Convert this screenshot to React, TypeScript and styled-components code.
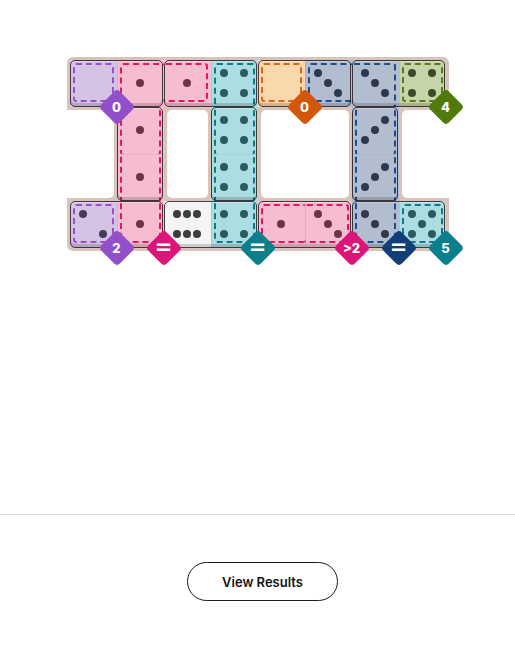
import React from "react";
import styled, { createGlobalStyle } from "styled-components";

const GlobalStyle = createGlobalStyle`
  body {
    margin: 0;
    background: #ffffff;
    font-family: "Liberation Sans", Arial, sans-serif;
  }
`;

type Tone = { bg: string; dash: string; pip: string; badge: string };

const tones: Record<string, Tone> = {
  purple: { bg: "#d5c3e3", dash: "#9850cf", pip: "#4a3a5a", badge: "#914fc9" },
  pink: { bg: "#f6bdd0", dash: "#e6155d", pip: "#6b3447", badge: "#dc1678" },
  teal: { bg: "#acdde3", dash: "#0c7b86", pip: "#2a5b60", badge: "#0b7f8c" },
  orange: { bg: "#f9d8ae", dash: "#e0650f", pip: "#5a3a1a", badge: "#d4560a" },
  blue: { bg: "#b2bed0", dash: "#1e4c8c", pip: "#2d394c", badge: "#133f78" },
  olive: { bg: "#c6d4aa", dash: "#5a7c15", pip: "#3e4a27", badge: "#507a0b" },
  none: { bg: "#f4f4f4", dash: "transparent", pip: "#3c3c3c", badge: "#444" },
};

// region id -> tone
const regionTone: Record<string, string> = {
  A: "purple",
  P: "pink",
  T: "teal",
  O: "orange",
  B: "blue",
  G: "olive",
  Q: "purple",
  R: "pink",
  S: "teal",
  W: "none",
};

const layout = [
  ["A", "P", "P", "T", "O", "B", "B", "G"],
  ["", "P", "", "T", "", "", "B", ""],
  ["", "P", "", "T", "", "", "B", ""],
  ["Q", "P", "W", "T", "R", "R", "B", "S"],
];

const pips = [
  [0, 1, 1, 4, 0, 3, 3, 4],
  [0, 1, 0, 4, 0, 0, 3, 0],
  [0, 1, 0, 4, 0, 0, 3, 0],
  [2, 1, 6, 4, 1, 3, 3, 5],
];

// vertical dominoes show their threes turned the other way
const turned = new Set(["1-6", "2-6"]);

const pipSpots: Record<string, [number, number][]> = {
  "0": [],
  "1": [[1, 1]],
  "2": [[0, 0], [2, 2]],
  "3": [[0, 0], [1, 1], [2, 2]],
  "3t": [[0, 2], [1, 1], [2, 0]],
  "4": [[0, 0], [0, 2], [2, 0], [2, 2]],
  "5": [[0, 0], [0, 2], [1, 1], [2, 0], [2, 2]],
  "6": [[0, 0], [0, 1], [0, 2], [2, 0], [2, 1], [2, 2]],
};

const dominoes = [
  { r: 0, c: 0, v: false },
  { r: 0, c: 2, v: false },
  { r: 0, c: 4, v: false },
  { r: 0, c: 6, v: false },
  { r: 1, c: 1, v: true },
  { r: 1, c: 3, v: true },
  { r: 1, c: 6, v: true },
  { r: 3, c: 0, v: false },
  { r: 3, c: 2, v: false },
  { r: 3, c: 4, v: false },
  { r: 3, c: 6, v: false },
];

const holes = [
  { r: 1, c: 0, span: 1, edge: "left" },
  { r: 1, c: 2, span: 1, edge: "none" },
  { r: 1, c: 4, span: 2, edge: "none" },
  { r: 1, c: 7, span: 1, edge: "right" },
];

const badges = [
  { r: 0, c: 0, tone: "purple", label: "0" },
  { r: 0, c: 4, tone: "orange", label: "0" },
  { r: 0, c: 7, tone: "olive", label: "4" },
  { r: 3, c: 0, tone: "purple", label: "2" },
  { r: 3, c: 1, tone: "pink", label: "=" },
  { r: 3, c: 3, tone: "teal", label: "=" },
  { r: 3, c: 5, tone: "pink", label: ">2" },
  { r: 3, c: 6, tone: "blue", label: "=" },
  { r: 3, c: 7, tone: "teal", label: "5" },
];

const Page = styled.div`
  display: flex;
  flex-direction: column;
  min-height: 669px;
`;

const Stage = styled.div`
  height: 514px;
  box-sizing: border-box;
  padding-top: 57px;
  display: flex;
  justify-content: center;
  align-items: flex-start;
`;

const Board = styled.div`
  display: grid;
  grid-template-columns: repeat(8, 47px);
  grid-template-rows: repeat(4, 47px);
  padding: 3px;
  background: #d9c4bb;
  border-radius: 6px;
`;

const Hole = styled.div<{ $r: number; $c: number; $span: number; $edge: string }>`
  grid-row: ${(p) => p.$r + 1} / span 2;
  grid-column: ${(p) => p.$c + 1} / span ${(p) => p.$span};
  background: #ffffff;
  margin: 3px;
  border-radius: 5px;
  ${(p) => p.$edge === "left" && "margin-left: -6px; border-radius: 0 5px 5px 0;"}
  ${(p) => p.$edge === "right" && "margin-right: -6px; border-radius: 5px 0 0 5px;"}
`;

const Cell = styled.div<{ $r: number; $c: number; $bg: string }>`
  grid-row: ${(p) => p.$r + 1};
  grid-column: ${(p) => p.$c + 1};
  position: relative;
  background: ${(p) => p.$bg};
  display: flex;
  align-items: center;
  justify-content: center;
`;

const Dashes = styled.div<{ $color: string; $t: boolean; $r: boolean; $b: boolean; $l: boolean }>`
  position: absolute;
  top: ${(p) => (p.$t ? "3px" : "-1px")};
  right: ${(p) => (p.$r ? "3px" : "-1px")};
  bottom: ${(p) => (p.$b ? "5px" : "-1px")};
  left: ${(p) => (p.$l ? "3px" : "-1px")};
  border: 2px dashed ${(p) => p.$color};
  border-top-style: ${(p) => (p.$t ? "dashed" : "none")};
  border-right-style: ${(p) => (p.$r ? "dashed" : "none")};
  border-bottom-style: ${(p) => (p.$b ? "dashed" : "none")};
  border-left-style: ${(p) => (p.$l ? "dashed" : "none")};
  border-radius: 3px;
`;

const PipGrid = styled.div`
  display: grid;
  grid-template-columns: repeat(3, 8px);
  grid-template-rows: repeat(3, 8px);
  gap: 2px;
  margin-bottom: 1px;
`;

const Pip = styled.span<{ $row: number; $col: number; $color: string }>`
  grid-row: ${(p) => p.$row + 1};
  grid-column: ${(p) => p.$col + 1};
  width: 8px;
  height: 8px;
  border-radius: 50%;
  background: ${(p) => p.$color};
`;

const Domino = styled.div<{ $r: number; $c: number; $v: boolean }>`
  grid-row: ${(p) => p.$r + 1} / span ${(p) => (p.$v ? 2 : 1)};
  grid-column: ${(p) => p.$c + 1} / span ${(p) => (p.$v ? 1 : 2)};
  position: relative;
  z-index: 2;
  border: 1px solid rgba(38, 28, 34, 0.85);
  border-radius: 5px;
  box-shadow: inset 0 -3px 0 rgba(0, 0, 0, 0.16), inset 0 1px 0 rgba(255, 255, 255, 0.25);
  margin: 0 0.5px;
  &::after {
    content: "";
    position: absolute;
    background: ${(p) => (p.$v ? "rgba(0, 0, 0, 0.04)" : "rgba(0, 0, 0, 0.07)")};
    ${(p) =>
      p.$v
        ? "left: 0; right: 0; top: 50%; height: 1px;"
        : "top: 0; bottom: 3px; left: 50%; width: 1px;"}
  }
`;

const BadgeSpot = styled.div<{ $r: number; $c: number }>`
  grid-row: ${(p) => p.$r + 1};
  grid-column: ${(p) => p.$c + 1};
  position: relative;
  z-index: 3;
`;

const Badge = styled.div<{ $bg: string }>`
  position: absolute;
  right: -13px;
  bottom: -13px;
  width: 26px;
  height: 26px;
  display: flex;
  align-items: center;
  justify-content: center;
  &::before {
    content: "";
    position: absolute;
    inset: 0;
    background: ${(p) => p.$bg};
    border-radius: 4px;
    transform: rotate(45deg);
  }
`;

const BadgeText = styled.span<{ $big: boolean }>`
  position: relative;
  color: #ffffff;
  font-family: ${(p) => (p.$big ? '"DejaVu Sans"' : "Inter")}, "Liberation Sans", sans-serif;
  font-weight: ${(p) => (p.$big ? 700 : 800)};
  font-size: ${(p) => (p.$big ? "21px" : "13px")};
  line-height: 1;
  margin-top: ${(p) => (p.$big ? "-1px" : "0")};
`;

const Divider = styled.div`
  height: 1px;
  background: #dcdcdc;
`;

const Footer = styled.div`
  display: flex;
  justify-content: center;
  padding: 47px 0 0 10px;
`;

const ResultsButton = styled.button`
  width: 151px;
  height: 39px;
  border: 1px solid #1a1a1a;
  border-radius: 20px;
  background: #ffffff;
  color: #121212;
  font-family: Inter, "Liberation Sans", sans-serif;
  font-weight: 600;
  font-size: 13px;
  cursor: pointer;
`;

const regionAt = (r: number, c: number) =>
  r < 0 || r > 3 || c < 0 || c > 7 ? "" : layout[r][c];

const App = () => (
  <Page>
    <GlobalStyle />
    <Stage>
      <Board>
        {holes.map((h) => (
          <Hole key={`h${h.r}-${h.c}`} $r={h.r} $c={h.c} $span={h.span} $edge={h.edge} />
        ))}
        {layout.map((row, r) =>
          row.map((id, c) => {
            if (!id) return null;
            const tone = tones[regionTone[id]];
            const key = turned.has(`${r}-${c}`) && pips[r][c] === 3 ? "3t" : String(pips[r][c]);
            return (
              <Cell key={`${r}-${c}`} $r={r} $c={c} $bg={tone.bg}>
                {id !== "W" && (
                  <Dashes
                    $color={tone.dash}
                    $t={regionAt(r - 1, c) !== id}
                    $r={regionAt(r, c + 1) !== id}
                    $b={regionAt(r + 1, c) !== id}
                    $l={regionAt(r, c - 1) !== id}
                  />
                )}
                <PipGrid>
                  {pipSpots[key].map(([pr, pc]) => (
                    <Pip key={`${pr}${pc}`} $row={pr} $col={pc} $color={tone.pip} />
                  ))}
                </PipGrid>
              </Cell>
            );
          })
        )}
        {dominoes.map((d) => (
          <Domino key={`d${d.r}-${d.c}`} $r={d.r} $c={d.c} $v={d.v} />
        ))}
        {badges.map((b) => (
          <BadgeSpot key={`b${b.r}-${b.c}`} $r={b.r} $c={b.c}>
            <Badge $bg={tones[b.tone].badge}>
              <BadgeText $big={b.label === "="}>{b.label}</BadgeText>
            </Badge>
          </BadgeSpot>
        ))}
      </Board>
    </Stage>
    <Divider />
    <Footer>
      <ResultsButton>View Results</ResultsButton>
    </Footer>
  </Page>
);

export default App;
